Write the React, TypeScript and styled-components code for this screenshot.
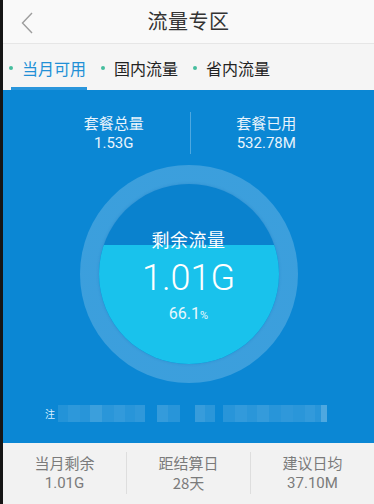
import React from "react";
import styled, { createGlobalStyle } from "styled-components";

const Global = createGlobalStyle`
  html, body { margin: 0; padding: 0; background: #151515; }
  body { font-family: Roboto, "Noto Sans CJK SC", sans-serif; }
`;

const Screen = styled.div`
  width: 371px;
  height: 504px;
  margin-left: 3px;
  background: #f5f5f5;
  display: flex;
  flex-direction: column;
  overflow: hidden;
`;

const Header = styled.header`
  height: 43px;
  background: #f9f9f9;
  border-bottom: 1px solid #e6e6e6;
  display: grid;
  grid-template-columns: 60px 1fr 60px;
  align-items: center;
`;

const Back = styled.div`
  padding-left: 18px;
  padding-top: 2px;
  display: flex;
  align-items: center;
`;

const Title = styled.h1`
  margin: 0;
  text-align: center;
  font-size: 20px;
  font-weight: 400;
  color: #333;
  font-family: "Noto Sans CJK SC", sans-serif;
  letter-spacing: 0.5px;
  padding-bottom: 2px;
`;

const Tabs = styled.nav`
  height: 46px;
  display: flex;
  align-items: stretch;
  gap: 15px;
  padding-left: 6px;
  background: #f5f5f5;
`;

const Tab = styled.div<{ $active?: boolean }>`
  position: relative;
  display: flex;
  align-items: center;
  gap: 9px;
  padding-top: 2px;
  font-family: "Noto Sans CJK SC", sans-serif;
  font-size: 16px;
  color: ${(p) => (p.$active ? "#2190d6" : "#222")};
  &::before {
    content: "";
    width: 4px;
    height: 4px;
    border-radius: 50%;
    background: #45bd9e;
  }
  &::after {
    content: "";
    position: absolute;
    left: 2px;
    right: -1px;
    bottom: 0;
    height: 3px;
    background: ${(p) => (p.$active ? "#2996dc" : "transparent")};
  }
`;

const Panel = styled.section`
  flex: none;
  height: 353px;
  box-sizing: border-box;
  background: #0b87d4;
  padding: 22px 0 0;
  display: flex;
  flex-direction: column;
  align-items: center;
`;

const Stats = styled.div`
  width: 100%;
  box-sizing: border-box;
  padding: 0 32px 0 35px;
  display: grid;
  grid-template-columns: 1fr 1px 1fr;
  align-items: center;
`;

const Stat = styled.div`
  display: flex;
  flex-direction: column;
  align-items: center;
  color: #e9f4fc;
  font-size: 15px;
  line-height: 20px;
  font-family: "Noto Sans CJK SC", sans-serif;
`;

const Num = styled.span`
  font-family: Roboto, "Noto Sans CJK SC", sans-serif;
`;

const VLine = styled.div<{ $light?: boolean }>`
  width: 1px;
  height: 42px;
  background: ${(p) => (p.$light ? "#dedede" : "rgba(255,255,255,0.28)")};
`;

const Ring = styled.div`
  margin-top: 11px;
  width: 218px;
  height: 218px;
  border-radius: 50%;
  background: radial-gradient(
    circle,
    rgba(255, 255, 255, 0.2) 82%,
    rgba(255, 255, 255, 0.16) 91%,
    rgba(255, 255, 255, 0.07) 100%
  );
  display: flex;
  align-items: center;
  justify-content: center;
`;

const Bowl = styled.div`
  position: relative;
  width: 180px;
  height: 180px;
  border-radius: 50%;
  overflow: hidden;
  background: #0a82ce;
  box-shadow: 0 0 3px rgba(10, 100, 180, 0.3);
`;

const Water = styled.div`
  position: absolute;
  left: 0;
  right: 0;
  bottom: 0;
  background: #19c2ec;
`;

const BowlText = styled.div`
  position: relative;
  display: flex;
  flex-direction: column;
  align-items: center;
  color: #fff;
  padding-top: 44px;
`;

const BowlLabel = styled.div`
  font-family: "Noto Sans CJK SC", sans-serif;
  font-size: 18px;
  line-height: 22px;
  letter-spacing: 0.5px;
`;

const Big = styled.div`
  margin-top: 8px;
  font-family: Roboto, sans-serif;
  font-weight: 300;
  font-size: 36px;
  line-height: 40px;
`;

const Pct = styled.div`
  margin-top: 6px;
  font-family: Roboto, sans-serif;
  font-size: 16px;
  line-height: 20px;
  color: #e8f8fd;
  small {
    font-size: 11px;
  }
`;

const Note = styled.div`
  margin-top: 21px;
  align-self: stretch;
  padding-left: 42px;
  display: flex;
  align-items: center;
  height: 18px;
  color: #dcefff;
  font-family: "Noto Sans CJK SC", sans-serif;
  font-size: 10px;
`;

const NoteLead = styled.span`
  width: 13px;
`;

const BlotGroup = styled.span<{ $gap: number }>`
  display: flex;
  height: 17px;
  margin-right: ${(p) => p.$gap}px;
`;

const Blot = styled.span<{ $w: number; $o: number }>`
  width: ${(p) => p.$w}px;
  height: 100%;
  background: rgba(255, 255, 255, ${(p) => p.$o});
`;

const Footer = styled.footer`
  flex: 1;
  background: #f2f2f2;
  display: grid;
  grid-template-columns: 1fr 1px 1fr 1px 1fr;
  align-items: center;
  padding-bottom: 2px;
`;

const FootStat = styled.div`
  display: flex;
  flex-direction: column;
  align-items: center;
  color: #7b7b7b;
  font-size: 15px;
  line-height: 20px;
  font-family: "Noto Sans CJK SC", sans-serif;
`;

const groups: { gap: number; cells: [number, number][] }[] = [
  {
    gap: 12,
    cells: [[10, 0.1], [12, 0.14], [10, 0.12], [12, 0.2], [12, 0.13], [11, 0.16], [10, 0.12], [10, 0.15]],
  },
  { gap: 15, cells: [[11, 0.17], [12, 0.12]] },
  { gap: 8, cells: [[10, 0.18], [10, 0.13]] },
  {
    gap: 0,
    cells: [[12, 0.12], [12, 0.16], [10, 0.13], [12, 0.17], [12, 0.12], [12, 0.15], [12, 0.13], [10, 0.16], [6, 0.12], [6, 0.28]],
  },
];

export default function App() {
  const used = 66.1;
  return (
    <>
      <Global />
      <Screen>
        <Header>
          <Back>
            <svg width="12" height="22" viewBox="0 0 12 22">
              <path d="M11 1 L1.5 11 L11 21" fill="none" stroke="#9d9d9d" strokeWidth="1.4" />
            </svg>
          </Back>
          <Title>流量专区</Title>
          <div />
        </Header>
        <Tabs>
          <Tab $active>当月可用</Tab>
          <Tab>国内流量</Tab>
          <Tab>省内流量</Tab>
        </Tabs>
        <Panel>
          <Stats>
            <Stat>
              套餐总量
              <Num>1.53G</Num>
            </Stat>
            <VLine />
            <Stat>
              套餐已用
              <Num>532.78M</Num>
            </Stat>
          </Stats>
          <Ring>
            <Bowl>
              <Water style={{ height: `${used}%` }} />
              <BowlText>
                <BowlLabel>剩余流量</BowlLabel>
                <Big>1.01G</Big>
                <Pct>
                  66.1<small>%</small>
                </Pct>
              </BowlText>
            </Bowl>
          </Ring>
          <Note>
            <NoteLead>注</NoteLead>
            {groups.map((g, i) => (
              <BlotGroup key={i} $gap={g.gap}>
                {g.cells.map(([w, o], j) => (
                  <Blot key={j} $w={w} $o={o} />
                ))}
              </BlotGroup>
            ))}
          </Note>
        </Panel>
        <Footer>
          <FootStat>
            当月剩余
            <Num>1.01G</Num>
          </FootStat>
          <VLine $light />
          <FootStat>
            距结算日
            <span>28天</span>
          </FootStat>
          <VLine $light />
          <FootStat>
            建议日均
            <Num>37.10M</Num>
          </FootStat>
        </Footer>
      </Screen>
    </>
  );
}
